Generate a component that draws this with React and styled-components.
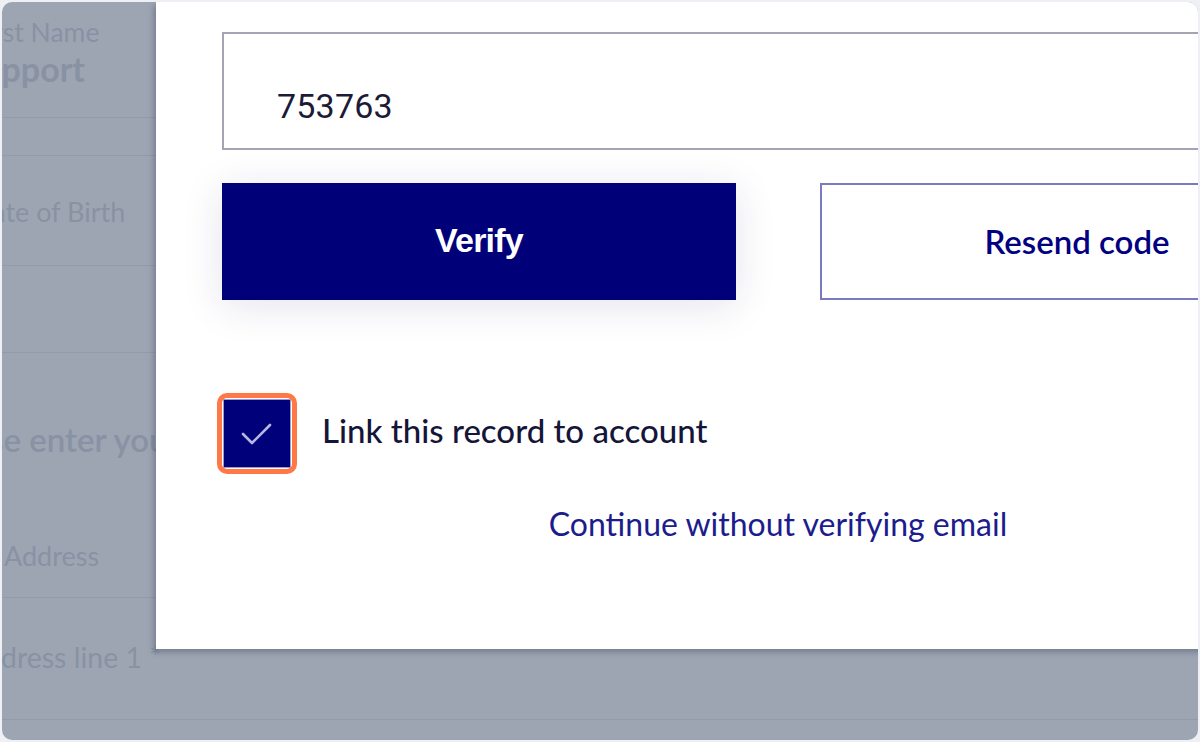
import React from "react";
import styled, { createGlobalStyle } from "styled-components";

const Global = createGlobalStyle`
  html, body { margin: 0; padding: 0; background: #eef0f5; }
  body { font-family: "Lato", "Noto Sans", sans-serif; }
  * { box-sizing: border-box; }
`;

const Frame = styled.div`
  position: relative;
  margin: 2px;
  width: 1196px;
  height: 738px;
  border-radius: 10px;
  overflow: hidden;
  background: #ffffff;
`;

const Page = styled.div`
  display: flex;
  flex-direction: column;
  margin-left: -30px;
  width: 1300px;
`;

const Label = styled.div`
  font-family: "Lato", sans-serif;
  font-size: ${(p) => p.size || 27}px;
  font-weight: ${(p) => p.weight || 400};
  line-height: 1.2;
  color: #d4d8df;
  white-space: nowrap;
  margin-left: ${(p) => p.indent || 0}px;
  margin-top: ${(p) => p.top || 0}px;
`;

const Divider = styled.div`
  height: 1px;
  background: #e8ebef;
  margin-top: ${(p) => p.top || 0}px;
`;

const Backdrop = styled.div`
  position: absolute;
  inset: 0;
  background: rgba(60, 75, 104, 0.5);
`;

const Modal = styled.div`
  position: absolute;
  left: 154px;
  top: 0;
  width: 1244px;
  height: 647px;
  background: #ffffff;
  padding: 30px 66px 0;
  display: flex;
  flex-direction: column;
  box-shadow: -2px 3px 6px rgba(40, 50, 70, 0.35);
`;

const CodeInput = styled.div`
  height: 118px;
  border: 2px solid #a3a6b2;
  padding: 55px 0 0 53px;
  font-family: "Roboto", "Liberation Sans", sans-serif;
  font-size: 34px;
  line-height: 1;
  color: #1b1b38;
  letter-spacing: 0.2px;
`;

const ButtonRow = styled.div`
  display: grid;
  grid-template-columns: 514px 514px;
  column-gap: 84px;
  margin-top: 33px;
`;

const Button = styled.div`
  height: 117px;
  display: flex;
  align-items: center;
  justify-content: center;
  background: ${(p) => (p.primary ? "#000078" : "#ffffff")};
  color: ${(p) => (p.primary ? "#ffffff" : "#000080")};
  border: ${(p) => (p.primary ? "none" : "2px solid #7a7ac4")};
  box-shadow: ${(p) => (p.primary ? "0 6px 40px rgba(30, 30, 110, 0.12)" : "none")};
  font-family: ${(p) =>
    p.primary ? '"Liberation Sans", Arial, sans-serif' : '"Lato", sans-serif'};
  font-weight: ${(p) => (p.primary ? 700 : 600)};
  font-size: ${(p) => (p.primary ? 34 : 33)}px;
  letter-spacing: ${(p) => (p.primary ? "-0.8px" : "0")};
  padding-bottom: 2px;
`;

const CheckRow = styled.div`
  display: flex;
  align-items: center;
  gap: 25px;
  margin-top: 93px;
  margin-left: -5px;
`;

const Highlight = styled.span`
  display: inline-flex;
  border: 5px solid #ff7845;
  border-radius: 10px;
  padding: 1px;
  background: #ffffff;
`;

const Box = styled.span`
  width: 68px;
  height: 69px;
  background: #00007a;
  border: 1px solid #9b9bc9;
  display: flex;
  align-items: center;
  justify-content: center;
`;

const CheckLabel = styled.span`
  font-family: "Lato", sans-serif;
  font-size: 33px;
  font-weight: 500;
  color: #15153a;
  padding-bottom: 8px;
`;

const LinkText = styled.div`
  margin-top: 31px;
  text-align: center;
  font-family: "Lato", sans-serif;
  font-size: 32px;
  line-height: 38px;
  color: #1c1c8c;
`;

export default function App() {
  return (
    <>
      <Global />
      <Frame>
        <Page>
          <Label size={26.5} top={15}>First Name</Label>
          <Label size={34} weight={700} indent={-8} top={0}>Support</Label>
          <Divider top={27} />
          <Divider top={37} />
          <Label size={27} top={40}>Date of Birth</Label>
          <Divider top={37} />
          <Divider top={86} />
          <Label size={33} weight={600} indent={-45} top={67}>Please enter your address</Label>
          <Label size={27} indent={32} top={80}>Address</Label>
          <Divider top={25} />
          <Label size={28.5} indent={-6} top={42}>Address line 1 *</Label>
          <Divider top={45} />
        </Page>
        <Backdrop />
        <Modal>
          <CodeInput>753763</CodeInput>
          <ButtonRow>
            <Button primary>Verify</Button>
            <Button>Resend code</Button>
          </ButtonRow>
          <CheckRow>
            <Highlight>
              <Box>
                <svg width="32" height="24" viewBox="0 0 32 24" fill="none">
                  <path
                    d="M2 12 L11 21 L29 3"
                    stroke="#b6b6e2"
                    strokeWidth="2.6"
                    strokeLinecap="round"
                    strokeLinejoin="round"
                  />
                </svg>
              </Box>
            </Highlight>
            <CheckLabel>Link this record to account</CheckLabel>
          </CheckRow>
          <LinkText>Continue without verifying email</LinkText>
        </Modal>
      </Frame>
    </>
  );
}
